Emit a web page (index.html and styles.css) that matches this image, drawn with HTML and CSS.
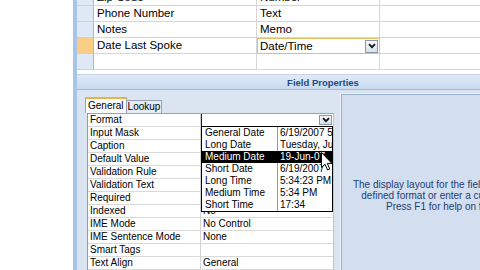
FILE: index.html
```html
<!DOCTYPE html>
<html lang="en">
<head>
  <meta charset="UTF-8" />
  <title>Table Design - Field Properties</title>
  <link rel="stylesheet" href="styles.css">
</head>
<body>
  <div class="app">
    <!-- Field list of the table design -->
    <div class="design">
      <div class="row">
        <div class="sel"></div><div class="cell name">Zip Code</div><div class="cell type">Number</div><div class="cell"></div>
      </div>
      <div class="row">
        <div class="sel"></div><div class="cell name">Phone Number</div><div class="cell type">Text</div><div class="cell"></div>
      </div>
      <div class="row">
        <div class="sel"></div><div class="cell name">Notes</div><div class="cell type">Memo</div><div class="cell"></div>
      </div>
      <div class="row">
        <div class="sel current"></div><div class="cell name">Date Last Spoke</div>
        <div class="cell type picked">
          <span>Date/Time</span>
          <span class="drop-btn">
            <svg width="8" height="6" viewBox="0 0 8 6"><path d="M1 1.2 L4 4.2 L7 1.2" fill="none" stroke="#111" stroke-width="1.8"/></svg>
          </span>
        </div>
        <div class="cell"></div>
      </div>
      <div class="row">
        <div class="sel"></div><div class="cell name"></div><div class="cell type"></div><div class="cell"></div>
      </div>
    </div>

    <div class="fp-band">Field Properties</div>

    <div class="props">
      <div class="prop-pane">
        <div class="tabs">
          <span class="tab active">General</span>
          <span class="tab">Lookup</span>
        </div>

        <div class="prop-grid">
          <div class="prow"><div>Format</div>
            <div class="combo">
              <span class="drop-btn small">
                <svg width="8" height="6" viewBox="0 0 8 6"><path d="M1 1.2 L4 4.2 L7 1.2" fill="none" stroke="#111" stroke-width="1.8"/></svg>
              </span>
            </div>
          </div>
          <div class="prow"><div>Input Mask</div><div></div></div>
          <div class="prow"><div>Caption</div><div></div></div>
          <div class="prow"><div>Default Value</div><div></div></div>
          <div class="prow"><div>Validation Rule</div><div></div></div>
          <div class="prow"><div>Validation Text</div><div></div></div>
          <div class="prow"><div>Required</div><div>No</div></div>
          <div class="prow"><div>Indexed</div><div>No</div></div>
          <div class="prow"><div>IME Mode</div><div>No Control</div></div>
          <div class="prow"><div>IME Sentence Mode</div><div>None</div></div>
          <div class="prow"><div>Smart Tags</div><div></div></div>
          <div class="prow"><div>Text Align</div><div>General</div></div>
          <div class="prow"><div>Show Date Picker</div><div>For dates</div></div>

          <!-- open Format list -->
          <div class="fmt-list">
            <div class="fmt-row"><span>General Date</span><span>6/19/2007 5:34:23 PM</span></div>
            <div class="fmt-row"><span>Long Date</span><span>Tuesday, June 19, 2007</span></div>
            <div class="fmt-row hl"><span>Medium Date</span><span>19-Jun-07</span></div>
            <div class="fmt-row"><span>Short Date</span><span>6/19/2007</span></div>
            <div class="fmt-row"><span>Long Time</span><span>5:34:23 PM</span></div>
            <div class="fmt-row"><span>Medium Time</span><span>5:34 PM</span></div>
            <div class="fmt-row"><span>Short Time</span><span>17:34</span></div>
          </div>
        </div>
      </div>

      <div class="desc-pane">
        <p>The display layout for the field. Select a pre-<br>defined format or enter a custom format.<br>Press F1 for help on formats.</p>
      </div>
    </div>
  </div>

  <!-- mouse pointer over the list -->
  <svg class="cursor" width="12" height="19" viewBox="0 0 12 19">
    <path d="M0.5 0.5 L0.5 15.5 L4 12.2 L6.6 18 L8.8 17 L6.3 11.4 L11 11.4 Z" fill="#fff" stroke="#000" stroke-width="1"/>
  </svg>
</body>
</html>
```

FILE: styles.css
```css
html, body {
  margin: 0;
  padding: 0;
}

body {
  width: 480px;
  height: 270px;
  overflow: hidden;
  position: relative;
  background: #fff;
  font-family: "Liberation Sans", Arial, sans-serif;
  color: #000;
}

*, *::before, *::after {
  box-sizing: border-box;
}

/* window area, starts right of the white strip */
.app {
  margin: -10px 0 0 73px;
  width: 496px;
  height: 300px;
  border-left: 4px solid #a9c4e9;
  background: #dbe5f2;
}

/* upper grid: field name / data type / description */
.design {
  background: #fff;
  padding-bottom: 4px;
}

.row {
  display: grid;
  grid-template-columns: 17px 163px 123px 1fr;
  height: 16px;
}

.sel {
  background: #dfe8f5;
  border-bottom: 1px solid #c4d3e8;
  border-right: 1px solid #a7b9d3;
}

.sel.current {
  background: #f9cd86;
}

.cell {
  border-bottom: 1px solid #d6d6d6;
  font-size: 11.5px;
  line-height: 15px;
  padding-left: 3px;
  white-space: nowrap;
  overflow: hidden;
}

.cell.name,
.cell.type {
  border-right: 1px solid #d6d6d6;
}

.cell.type {
  padding-left: 3px;
}

.cell.picked {
  display: flex;
  align-items: center;
  justify-content: space-between;
  border: 1px solid #e3c062;
  padding-left: 2px;
  padding-right: 1px;
}

.drop-btn {
  display: flex;
  align-items: center;
  justify-content: center;
  width: 13px;
  height: 13px;
  border: 1px solid #8797ad;
  background: linear-gradient(#f6f8fb, #d9e0ea);
}

.drop-btn.small {
  height: 10px;
  width: 13px;
}

/* "Field Properties" caption bar */
.fp-band {
  height: 16px;
  line-height: 15px;
  text-align: center;
  font-size: 9.5px;
  font-weight: bold;
  color: #1d4a89;
  background: linear-gradient(#e0eaf7, #c8daf0);
  border-top: 1px solid #c5d6ec;
  border-bottom: 1px solid #9fb9dc;
}

.props {
  display: flex;
  align-items: flex-start;
}

.prop-pane {
  width: 261px;
  padding: 7px 0 0 8px;
}

.tabs {
  display: flex;
  align-items: flex-end;
  height: 16px;
}

.tab {
  height: 13px;
  padding: 0 1px;
  font-size: 10px;
  line-height: 12px;
  background: #e5ecf6;
  border: 1px solid #95a4ba;
  border-bottom: none;
  border-left: none;
}

.tab.active {
  height: 16px;
  padding: 0 2px;
  line-height: 14px;
  background: #fbfcfe;
  border-left: 1px solid #95a4ba;
  border-top: 2px solid #e8b447;
}

.prop-grid {
  position: relative;
  margin-left: 2px;
  width: 247px;
  background: #fff;
  border-left: 1px solid #8e9bb0;
  border-top: 1px solid #95a4ba;
  border-right: 1px solid #c3c3c3;
}

.prow {
  display: grid;
  grid-template-columns: 113px 1fr;
  height: 13px;
}

.prow > div {
  border-bottom: 1px solid #d9d9d9;
  font-size: 10px;
  line-height: 12px;
  padding-left: 2px;
  white-space: nowrap;
  overflow: hidden;
}

.prow > div:first-child {
  border-right: 1px solid #d2d2d2;
}

.prow > .combo {
  display: flex;
  justify-content: flex-end;
  align-items: center;
  padding-right: 1px;
  border-left: 1px solid #222;
}

/* open drop-down list of formats */
.fmt-list {
  position: absolute;
  left: 113px;
  top: 12px;
  width: 132px;
  background: #fff;
  border: 1px solid #000;
}

.fmt-row {
  display: grid;
  grid-template-columns: 76px 1fr;
  height: 12px;
  font-size: 10px;
  line-height: 12px;
}

.fmt-row span {
  white-space: nowrap;
  overflow: hidden;
}

.fmt-row span:first-child {
  padding-left: 3px;
  border-right: 1px solid #9a9a9a;
}

.fmt-row span:last-child {
  padding-left: 2px;
}

.fmt-row.hl {
  background: #000;
  color: #fff;
}

.fmt-row.hl span:first-child {
  border-right-color: #000;
}

/* right-hand help text */
.desc-pane {
  margin: 4px 0 0 3px;
  width: 228px;
  height: 220px;
  padding: 84px 9px 0 0;
  background: #d3dfef;
  border: 1px solid #9bb1d0;
  box-shadow: -1px -1px 0 #edf2f9;
  text-align: center;
  color: #1f3c72;
}

.desc-pane p {
  margin: 0;
  font-size: 10px;
  line-height: 11px;
  white-space: nowrap;
}

.cursor {
  position: absolute;
  left: 321px;
  top: 152px;
}
```
